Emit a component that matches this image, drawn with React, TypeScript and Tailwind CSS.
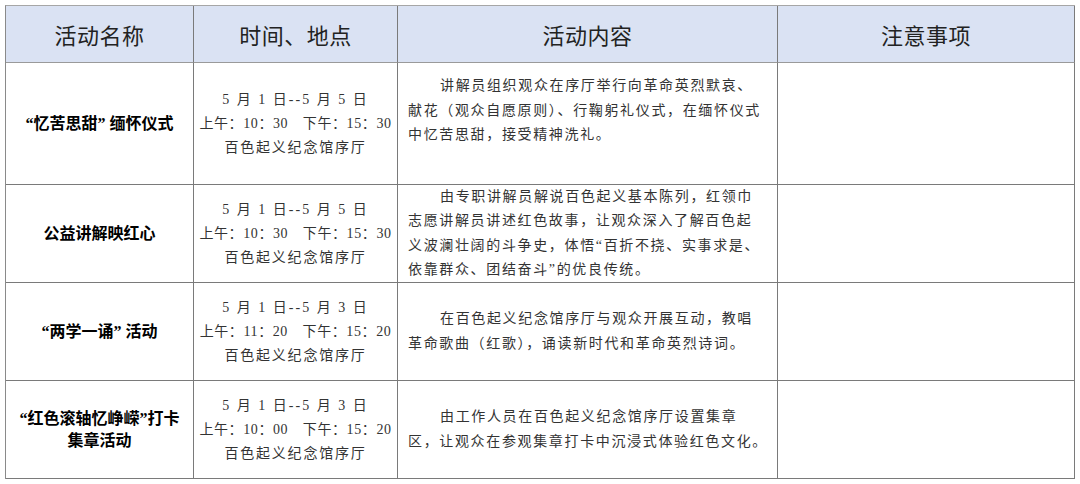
const headers = ['活动名称', '时间、地点', '活动内容', '注意事项']

const rows = [
  {
    name: ['“忆苦思甜” 缅怀仪式'],
    time: ['5 月 1 日--5 月 5 日', '上午：10：30　下午：15：30'],
    content: ['讲解员组织观众在序厅举行向革命英烈默哀、', '献花（观众自愿原则）、行鞠躬礼仪式，在缅怀仪式', '中忆苦思甜，接受精神洗礼。'],
    extraBottom: true,
  },
  {
    name: ['公益讲解映红心'],
    time: ['5 月 1 日--5 月 5 日', '上午：10：30　下午：15：30'],
    content: ['由专职讲解员解说百色起义基本陈列，红领巾', '志愿讲解员讲述红色故事，让观众深入了解百色起', '义波澜壮阔的斗争史，体悟“百折不挠、实事求是、', '依靠群众、团结奋斗”的优良传统。'],
  },
  {
    name: ['“两学一诵” 活动'],
    time: ['5 月 1 日--5 月 3 日', '上午：11：20　下午：15：20'],
    content: ['在百色起义纪念馆序厅与观众开展互动，教唱', '革命歌曲（红歌），诵读新时代和革命英烈诗词。'],
  },
  {
    name: ['“红色滚轴忆峥嵘”打卡', '集章活动'],
    time: ['5 月 1 日--5 月 3 日', '上午：10：00　下午：15：20'],
    content: ['由工作人员在百色起义纪念馆序厅设置集章', '区，让观众在参观集章打卡中沉浸式体验红色文化。'],
  },
]

const serif = "font-['Liberation_Serif','Noto_Sans_CJK_SC',serif]"

export default function App() {
  return (
    <div className="w-[1080px] h-[484px] bg-white pt-[5px] pl-[5px]">
      <div className="grid grid-cols-[188px_204px_380px_297px] grid-rows-[57px_122px_98px_98px_98px] w-[1070px] border-l border-t border-l-[#8a8a8a] border-t-[#a6a6a6]">
        {/* Header */}
        {headers.map((h) => (
          <div
            key={h}
            className="flex items-center justify-center bg-[#dae2f3] border-r border-b border-r-[#7a7a7a] border-b-[#9a9a9a] font-['Noto_Sans_CJK_SC',sans-serif] text-[22px] text-[#222] tracking-[0.5px]"
          >
            {h}
          </div>
        ))}

        {rows.map((r, i) => (
          <div key={i} className="contents">
            {/* Name */}
            <div className={`flex flex-col items-center justify-center border-r border-b border-[#7a7a7a] ${serif} font-bold text-[16px] leading-[22px] text-black`}>
              {r.name.map((n) => (
                <span key={n} className="whitespace-pre">{n}</span>
              ))}
            </div>

            {/* Time and place */}
            <div className={`flex flex-col items-center justify-center border-r border-b border-[#7a7a7a] ${serif} text-[14px] leading-[24px] text-[#333]`}>
              <span className="whitespace-nowrap tracking-[2px]">{r.time[0]}</span>
              <span className="whitespace-nowrap tracking-[0.6px]">{r.time[1]}</span>
              <span className="whitespace-nowrap tracking-[1.8px]">百色起义纪念馆序厅</span>
            </div>

            {/* Content */}
            <div className={`flex flex-col justify-center border-r border-b border-[#7a7a7a] pl-[10px] ${r.extraBottom ? 'pb-[25px]' : ''} ${serif} text-[14px] leading-[24.5px] tracking-[1.65px] text-[#333]`}>
              {r.content.map((c, j) => (
                <span key={j} className={`whitespace-nowrap ${j === 0 ? 'pl-[32px]' : ''}`}>{c}</span>
              ))}
            </div>

            {/* Notes */}
            <div className="border-r border-b border-[#7a7a7a]" />
          </div>
        ))}
      </div>
    </div>
  )
}
